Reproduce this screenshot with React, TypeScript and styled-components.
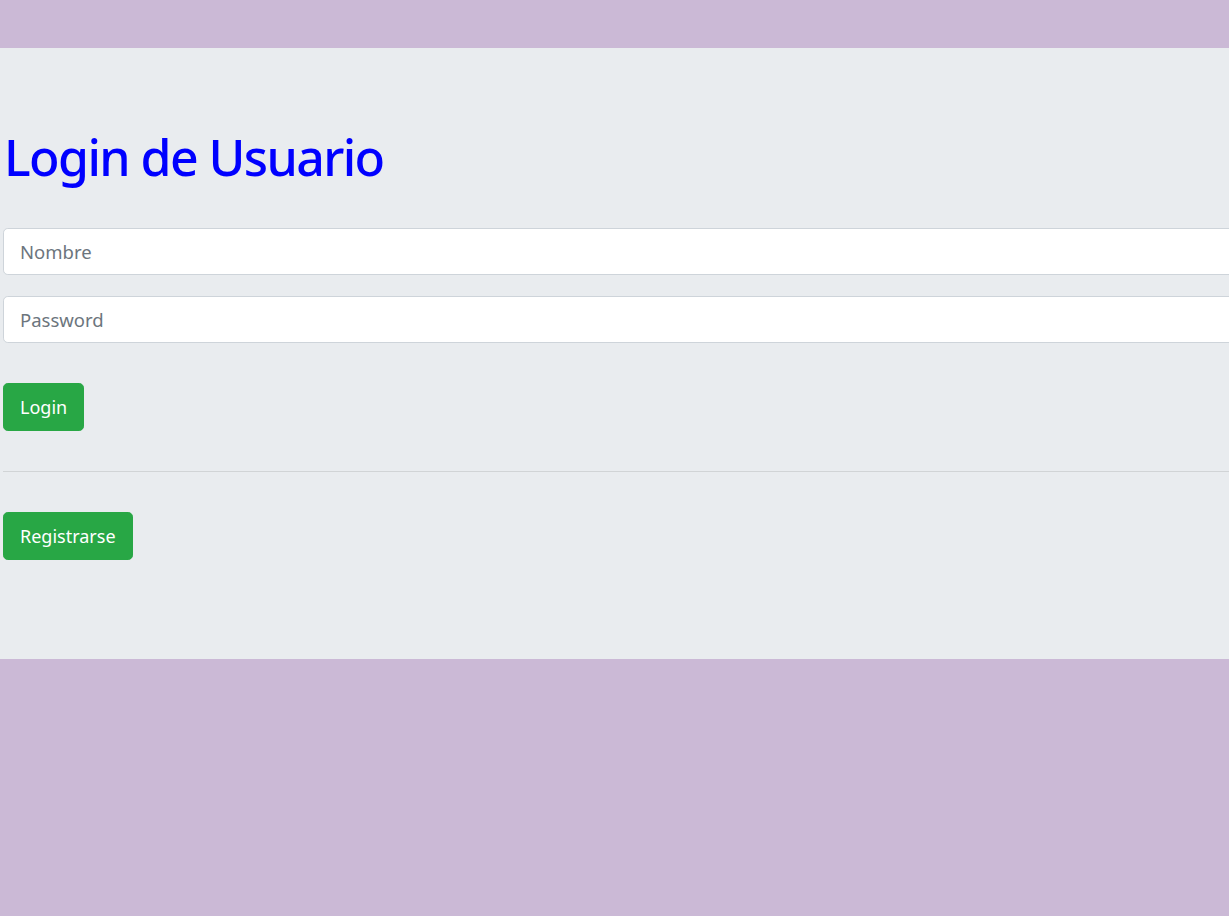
import React from "react";
import styled, { createGlobalStyle } from "styled-components";

const Global = createGlobalStyle`
  html, body { margin: 0; padding: 0; }
  body {
    background: #cbb9d6;
    font-family: "Noto Sans", "Open Sans", sans-serif;
    overflow-x: hidden;
  }
  * { box-sizing: border-box; }
`;

const Page = styled.div`
  padding-top: 48px;
  min-height: 916px;
`;

const Jumbotron = styled.section`
  background: #e9ecef;
  padding: 76px 0 99px 3px;
  overflow: hidden;
`;

const Title = styled.h1`
  margin: 0 0 37px 1px;
  color: #0000ff;
  font-size: 50px;
  font-weight: 500;
  letter-spacing: -1.6px;
  line-height: 67px;
  height: 67px;
  display: flex;
  align-items: center;
`;

const Form = styled.form`
  display: flex;
  flex-direction: column;
  gap: 21px;
`;

const Input = styled.input`
  width: calc(100% + 40px);
  height: 47px;
  padding: 8px 16px;
  font-family: inherit;
  font-size: 18.5px;
  color: #495057;
  background: #fff;
  border: 1px solid #ced4da;
  border-radius: 4.8px;
  outline: none;
  &::placeholder { color: #6c757d; }
`;

const Button = styled.button`
  align-self: flex-start;
  height: 48px;
  padding: 0 16px;
  font-family: inherit;
  font-size: 18px;
  color: #fff;
  background: #28a745;
  border: 1px solid #28a745;
  border-radius: 4.8px;
  cursor: pointer;
`;

const LoginButton = styled(Button)`
  margin-top: 19px;
`;

const Divider = styled.hr`
  margin: 40px 0;
  border: 0;
  border-top: 1px solid rgba(0, 0, 0, 0.1);
  width: 100%;
`;

export default function App() {
  return (
    <>
      <Global />
      <Page>
        <Jumbotron>
          <Title>Login de Usuario</Title>
          <Form onSubmit={(e) => e.preventDefault()}>
            <Input type="text" placeholder="Nombre" />
            <Input type="password" placeholder="Password" />
            <LoginButton type="submit">Login</LoginButton>
          </Form>
          <Divider />
          <Button type="button">Registrarse</Button>
        </Jumbotron>
      </Page>
    </>
  );
}
